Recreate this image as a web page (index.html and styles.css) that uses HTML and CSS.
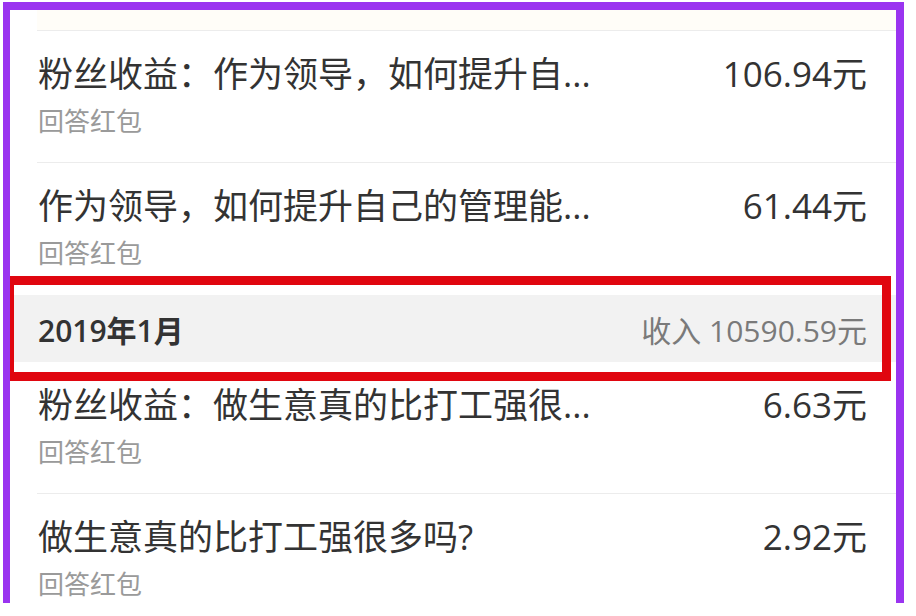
FILE: index.html
```html
<!DOCTYPE html>
<html lang="zh-CN">
<head>
    <meta charset="UTF-8">
    <meta name="viewport" content="width=device-width, initial-scale=1.0">
    <title>收益明细</title>
    <link rel="stylesheet" href="styles.css">
</head>
<body>
    <div class="frame">
        <div class="row-tail"></div>

        <div class="row">
            <div class="info">
                <p class="title">粉丝收益：作为领导，如何提升自...</p>
                <p class="sub">回答红包</p>
            </div>
            <span class="amount">106.94元</span>
        </div>

        <div class="row last">
            <div class="info">
                <p class="title">作为领导，如何提升自己的管理能...</p>
                <p class="sub">回答红包</p>
            </div>
            <span class="amount">61.44元</span>
        </div>

        <div class="month">
            <span class="month-name">2019年1月</span>
            <span class="month-total">收入 10590.59元</span>
        </div>

        <div class="row">
            <div class="info">
                <p class="title">粉丝收益：做生意真的比打工强很...</p>
                <p class="sub">回答红包</p>
            </div>
            <span class="amount">6.63元</span>
        </div>

        <div class="row">
            <div class="info">
                <p class="title">做生意真的比打工强很多吗?</p>
                <p class="sub">回答红包</p>
            </div>
            <span class="amount">2.92元</span>
        </div>
    </div>
</body>
</html>
```

FILE: styles.css
```css
body {
    margin: 0;
    background: #fff;
    font-family: "Open Sans", "Noto Sans CJK SC", sans-serif;
    color: #333;
}
.frame {
    box-sizing: border-box;
    width: 901px;
    height: 601px;
    margin: 2px 0 0 3px;
    border: 8px solid #9a34f0;
    border-left-width: 7px;
    border-bottom: none;
    overflow: hidden;
    background: #fff;
}
.row-tail {
    height: 20px;
    margin-left: 27px;
    border-bottom: 1px solid #ececec;
    background: #fffdf8;
}
.row {
    display: flex;
    align-items: flex-start;
    height: 132px;
    margin-left: 27px;
    padding: 17px 29px 0 1px;
    box-sizing: border-box;
    border-bottom: 1px solid #ececec;
}
.row.last {
    border-bottom: none;
}
.info {
    flex: 1;
    min-width: 0;
}
.info p {
    margin: 0;
    white-space: nowrap;
}
.title {
    font-size: 35px;
    line-height: 52px;
    color: #333;
}
.sub {
    font-size: 26px;
    line-height: 42px;
    color: #9a9a9a;
}
.amount {
    font-size: 35px;
    line-height: 52px;
    color: #333;
    white-space: nowrap;
}
.month {
    position: relative;
    display: flex;
    justify-content: space-between;
    align-items: center;
    height: 67px;
    padding: 0 29px 0 28px;
    background: #f2f2f2;
    font-size: 30px;
}
.month-name {
    font-weight: 600;
    color: #333;
}
.month-total {
    color: #7a7a7a;
}
/* red highlight box drawn over the month header */
.month::after {
    content: "";
    position: absolute;
    left: -5px;
    top: -19px;
    width: 886px;
    height: 105px;
    box-sizing: border-box;
    border: 9px solid #e0060f;
}
```
